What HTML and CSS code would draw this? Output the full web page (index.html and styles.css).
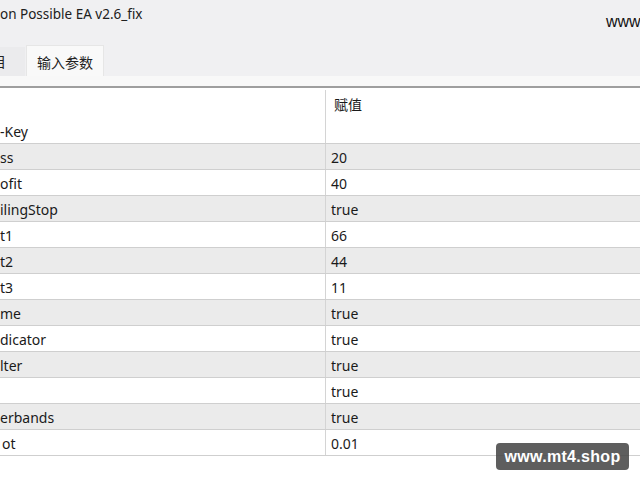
FILE: index.html
```html
<!DOCTYPE html>
<html>
<head>
<meta charset="utf-8">
<link rel="stylesheet" href="styles.css">
</head>
<body>
<div class="window">
  <div class="titlebar">
    <span class="title">on Possible EA v2.6_fix</span>
    <span class="site">www.mt4.shop</span>
  </div>
  <div class="tabs">
    <div class="tab first">目</div>
    <div class="tab active">输入参数</div>
  </div>
  <div class="band"></div>
  <div class="table">
    <div class="row header"><div class="name"></div><div class="value">赋值</div></div>
    <div class="row"><div class="name">-Key</div><div class="value"></div></div>
    <div class="row alt"><div class="name">ss</div><div class="value">20</div></div>
    <div class="row"><div class="name">ofit</div><div class="value">40</div></div>
    <div class="row alt"><div class="name">ilingStop</div><div class="value">true</div></div>
    <div class="row"><div class="name">t1</div><div class="value">66</div></div>
    <div class="row alt"><div class="name">t2</div><div class="value">44</div></div>
    <div class="row"><div class="name">t3</div><div class="value">11</div></div>
    <div class="row alt"><div class="name">me</div><div class="value">true</div></div>
    <div class="row"><div class="name">dicator</div><div class="value">true</div></div>
    <div class="row alt"><div class="name">lter</div><div class="value">true</div></div>
    <div class="row"><div class="name"></div><div class="value">true</div></div>
    <div class="row alt"><div class="name">erbands</div><div class="value">true</div></div>
    <div class="row"><div class="name lot">ot</div><div class="value">0.01</div></div>
  </div>
  <div class="watermark">www.mt4.shop</div>
</div>
</body>
</html>
```
FILE: styles.css
```css
html, body {
  margin: 0;
  padding: 0;
  background: #ffffff;
}
.window {
  position: relative;
  width: 640px;
  height: 480px;
  overflow: hidden;
  font-family: "Noto Sans", "Noto Sans CJK SC", sans-serif;
  font-size: 14px;
  color: #1a1a1a;
  background: #ffffff;
}
.titlebar {
  display: flex;
  justify-content: space-between;
  align-items: flex-start;
  height: 45px;
  background: #f0f0f2;
  white-space: nowrap;
}
.title {
  padding-top: 4px;
  line-height: 20px;
  font-size: 13.5px;
  color: #202020;
}
.site {
  margin-top: 12px;
  margin-right: -70px;
  font-family: "Liberation Sans", sans-serif;
  font-size: 16px;
  line-height: 20px;
  color: #111;
}
.tabs {
  display: flex;
  align-items: flex-end;
  gap: 1px;
  height: 31px;
  background: #f0f0f2;
}
.tab {
  font-family: "Noto Sans CJK SC", sans-serif;
  font-size: 14px;
  line-height: 29px;
  color: #222;
}
.tab.first {
  margin-left: -8px;
  padding-right: 19px;
  height: 29px;
  background: #ebebed;
}
.tab.active {
  padding: 0 10px;
  height: 31px;
  line-height: 32px;
  background: #f9f9f9;
  border: 1px solid #e6e6e6;
  border-bottom: none;
  box-sizing: border-box;
}
.band {
  height: 10px;
  background: #f8f8f8;
  border-bottom: 2px solid #9e9e9e;
}
.table {
  display: flex;
  flex-direction: column;
}
.row {
  display: flex;
  height: 26px;
  box-sizing: border-box;
  border-bottom: 1px solid #cfcfcf;
  background: #ffffff;
}
.row.alt {
  background: #ebebeb;
}
.row.header {
  height: 30px;
  border-bottom: none;
  align-items: stretch;
}
.row.header .value {
  font-family: "Noto Sans CJK SC", sans-serif;
  padding-left: 8px;
  padding-top: 2px;
  margin-top: 2px;
}
.name {
  width: 325px;
  box-sizing: border-box;
  padding-top: 1px;
  line-height: 25px;
  white-space: nowrap;
  overflow: hidden;
}
.name.lot {
  padding-left: 2px;
}
.value {
  flex: 1;
  border-left: 1px solid #d4d4d4;
  padding-left: 5px;
  padding-top: 1px;
  line-height: 25px;
}
.watermark {
  position: absolute;
  left: 496px;
  top: 443px;
  width: 133px;
  height: 27px;
  border-radius: 4px;
  background: rgba(72, 72, 72, 0.88);
  color: #ffffff;
  font-family: "Liberation Sans", sans-serif;
  font-weight: bold;
  font-size: 16px;
  line-height: 27px;
  text-align: center;
  letter-spacing: 0.3px;
}
```
